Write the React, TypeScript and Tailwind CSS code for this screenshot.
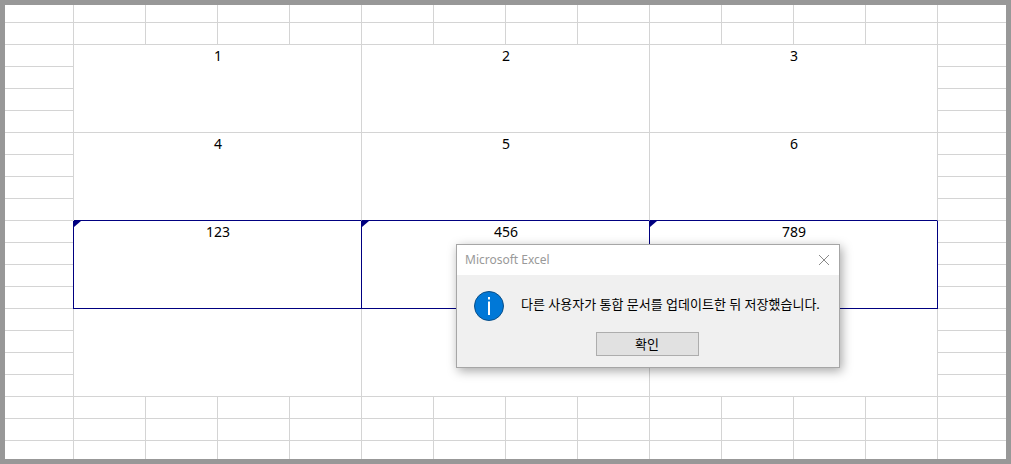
import React, { useState } from "react";

const columns = Array.from({ length: 12 }, (_, i) => i);

const groups = [
  { values: ["1", "2", "3"], active: false, cell: "border-[#d4d4d4]" },
  { values: ["4", "5", "6"], active: false, cell: "border-r-[#d4d4d4] border-b-[#000080]" },
  { values: ["123", "456", "789"], active: true, cell: "border-[#000080] shadow-[-1px_0_0_#000080]" },
  { values: ["", "", ""], active: false, cell: "border-[#d4d4d4]" },
];

function EmptyRow({ height }: { height: string }) {
  return (
    <tr className={height}>
      <td className="border-r border-b border-[#d4d4d4] p-0" />
      {columns.map((c) => (
        <td key={c} className="border-r border-b border-[#d4d4d4] p-0" />
      ))}
      <td className="border-b border-[#d4d4d4] p-0" />
    </tr>
  );
}

function Sheet() {
  return (
    <table className="w-full table-fixed border-separate border-spacing-0">
      <colgroup>
        <col />
        {columns.map((c) => (
          <col key={c} className="w-[72px]" />
        ))}
        <col />
      </colgroup>
      <tbody>
        <EmptyRow height="h-[18px]" />
        <EmptyRow height="h-[22px]" />

        {/* Merged cells, each four rows by four columns */}
        {groups.map((group, g) =>
          [0, 1, 2, 3].map((r) => (
            <tr key={`${g}-${r}`} className="h-[22px]">
              <td className="border-r border-b border-[#d4d4d4] p-0" />
              {r === 0 &&
                group.values.map((value, i) => (
                  <td
                    key={i}
                    rowSpan={4}
                    colSpan={4}
                    className={`relative border-r border-b py-0 pr-0 pl-0.5 text-center align-top text-sm leading-[22px] text-black ${group.cell}`}
                  >
                    {group.active && (
                      <svg className="absolute top-0 left-0 h-[6px] w-[7px]" viewBox="0 0 7 6" aria-hidden="true">
                        <path d="M0 0H7L0 6Z" fill="#000080" />
                      </svg>
                    )}
                    {value}
                  </td>
                ))}
              <td className="border-b border-[#d4d4d4] p-0" />
            </tr>
          ))
        )}

        <EmptyRow height="h-[22px]" />
        <EmptyRow height="h-[22px]" />
      </tbody>
      <tfoot>
        <tr className="h-[18px]">
          <td className="border-r border-[#d4d4d4] p-0" />
          {columns.map((c) => (
            <td key={c} className="border-r border-[#d4d4d4] p-0" />
          ))}
          <td className="p-0" />
        </tr>
      </tfoot>
    </table>
  );
}

function MessageBox({ onClose }: { onClose: () => void }) {
  return (
    <div
      role="alertdialog"
      aria-labelledby="box-title"
      aria-describedby="box-message"
      className="absolute top-[244px] left-[456px] w-96 border border-[#a6a6a6] bg-[#f0f0f0] shadow-[2px_3px_10px_rgba(0,0,0,0.35)]"
    >
      <div className="flex h-[30px] items-center justify-between bg-white px-2">
        <h1 id="box-title" className="text-xs text-[#999999]">
          Microsoft Excel
        </h1>
        <button type="button" aria-label="닫기" onClick={onClose} className="p-px">
          <svg className="h-3 w-3" viewBox="0 0 12 12" fill="none" stroke="#8a8a8a" aria-hidden="true">
            <path d="M1 1L11 11M11 1L1 11" />
          </svg>
        </button>
      </div>

      <div className="flex items-start gap-4 pt-[15px] pl-4">
        <svg className="h-8 w-8 shrink-0" viewBox="0 0 32 32" aria-hidden="true">
          <circle cx="16" cy="16" r="14.5" fill="#0078d7" stroke="#0b4f88" />
          <path d="M15 7H17V9.5H15ZM15 11.5H17V25H15Z" fill="#ffffff" />
        </svg>
        <p id="box-message" className="pt-1 text-[13px] leading-5 whitespace-nowrap text-black">
          다른 사용자가 통합 문서를 업데이트한 뒤 저장했습니다.
        </p>
      </div>

      <div className="flex justify-center pt-2.5 pr-0.5 pb-[11px]">
        <button
          type="button"
          onClick={onClose}
          className="h-6 w-[103px] border border-[#adadad] bg-[#e1e1e1] text-[13px] leading-5 text-black"
        >
          확인
        </button>
      </div>
    </div>
  );
}

export default function App() {
  const [open, setOpen] = useState(true);

  return (
    <main className="relative min-h-screen bg-white font-['Noto_Sans','Noto_Sans_CJK_KR',sans-serif]">
      <div className="border-[5px] border-[#989898]">
        <Sheet />
      </div>
      {open && <MessageBox onClose={() => setOpen(false)} />}
    </main>
  );
}
